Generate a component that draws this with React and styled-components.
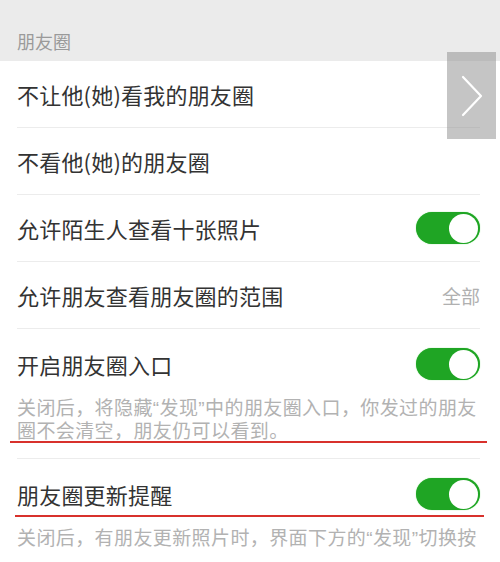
import React from 'react'
import styled, { createGlobalStyle } from 'styled-components'

const GlobalStyle = createGlobalStyle`
    body {
        margin: 0;
        background: #fff;
        font-family: "Noto Sans CJK SC", "Noto Sans", sans-serif;
        overflow: hidden;
    }
`

const Page = styled.div`
    position: relative;
    width: 500px;
    height: 562px;
    overflow: hidden;
    background: #fff;
`

const SectionHeader = styled.div`
    height: 61px;
    background: #ebebeb;
    box-sizing: border-box;
    padding: 25px 0 0 17px;
    font-size: 18px;
    line-height: 32px;
    color: #9a9a9a;
`

const List = styled.div`
    display: flex;
    flex-direction: column;
`

const Item = styled.div`
    margin-left: 17px;
    margin-right: 20px;
    border-bottom: ${({ last }) => last ? 'none' : '1px solid #ececec'};
    padding-bottom: ${({ hasDesc }) => hasDesc ? '18.5px' : '0'};
`

const TitleRow = styled.div`
    height: ${({ tall }) => tall ? '70px' : '66px'};
    display: flex;
    align-items: center;
    justify-content: space-between;
`

const Title = styled.span`
    font-size: 22px;
    color: #333;
    letter-spacing: 0.2px;
`

const Value = styled.span`
    font-size: 19px;
    color: #b0b0b0;
`

const Desc = styled.div`
    font-size: 19px;
    line-height: 21px;
    letter-spacing: 0.4px;
    color: #b2b2b2;
    margin-top: -3.5px;
    white-space: pre-line;
`

const Quote = styled.span`
    font-family: "Liberation Sans", sans-serif;
`

const Toggle = styled.div`
    width: 64px;
    height: 32px;
    border-radius: 16px;
    background: #1fa524;
    box-shadow: 0 0 1px #5fd35f;
    display: flex;
    align-items: center;
    justify-content: flex-end;
    padding: 0 2px;
    box-sizing: border-box;
`

const Knob = styled.div`
    width: 29px;
    height: 29px;
    border-radius: 50%;
    background: #fff;
`

const SideButton = styled.div`
    position: absolute;
    left: 447px;
    top: 52px;
    width: 49px;
    height: 87px;
    background: rgba(140, 140, 140, 0.5);
    display: flex;
    align-items: center;
    justify-content: center;
`

const RedMark = styled.div`
    position: absolute;
    left: ${({ x }) => x}px;
    top: ${({ y }) => y}px;
    width: ${({ w }) => w}px;
    height: 2px;
    background: #d8312c;
`

const items = [
    { title: '不让他(她)看我的朋友圈' },
    { title: '不看他(她)的朋友圈' },
    { title: '允许陌生人查看十张照片', toggle: true },
    { title: '允许朋友查看朋友圈的范围', value: '全部' },
    { title: '开启朋友圈入口', toggle: true, desc: ['关闭后，将隐藏', '发现', '中的朋友圈入口，你发过的朋友\n圈不会清空，朋友仍可以看到。'] },
    { title: '朋友圈更新提醒', toggle: true, desc: ['关闭后，有朋友更新照片时，界面下方的', '发现', '切换按'] },
]

const App = () => {
    return (
        <Page>
            <GlobalStyle />
            <SectionHeader>朋友圈</SectionHeader>
            <List>
                {items.map((item, i) => (
                    <Item key={i} hasDesc={!!item.desc} last={i === items.length - 1}>
                        <TitleRow tall={!!item.desc}>
                            <Title>{item.title}</Title>
                            {item.toggle && <Toggle><Knob /></Toggle>}
                            {item.value && <Value>{item.value}</Value>}
                        </TitleRow>
                        {item.desc && (
                            <Desc>
                                {item.desc[0]}<Quote>“</Quote>{item.desc[1]}<Quote>”</Quote>{item.desc[2]}
                            </Desc>
                        )}
                    </Item>
                ))}
            </List>
            <SideButton>
                <svg width="22" height="42" viewBox="0 0 22 42">
                    <path d="M2 2 L20 21 L2 40" fill="none" stroke="#fff" strokeWidth="2.2" strokeLinecap="round" strokeLinejoin="round" />
                </svg>
            </SideButton>
            <RedMark x={10} y={441} w={477} />
            <RedMark x={15} y={515} w={469} />
        </Page>
    )
}

export default App
